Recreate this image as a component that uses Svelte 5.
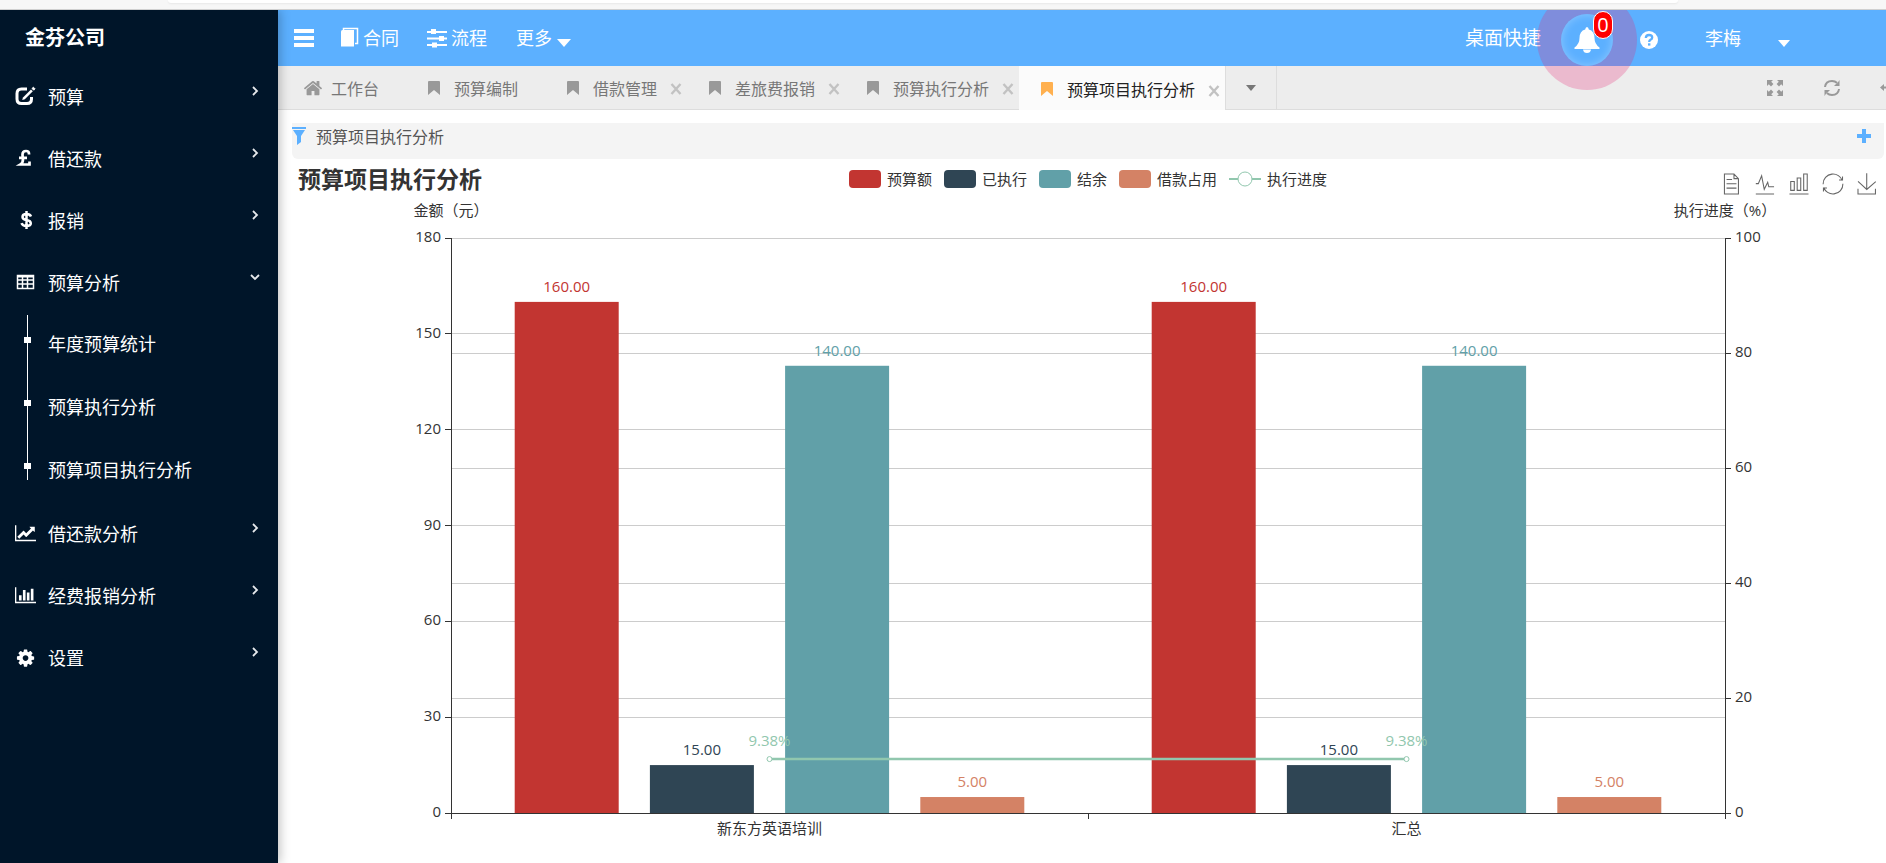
<script>
	let chartWidth = 1593;

	const menu = [
		{ name: '预算', icon: 'edit' },
		{ name: '借还款', icon: 'gbp' },
		{ name: '报销', icon: 'usd' },
		{
			name: '预算分析',
			icon: 'table',
			open: true,
			children: ['年度预算统计', '预算执行分析', '预算项目执行分析']
		},
		{ name: '借还款分析', icon: 'line' },
		{ name: '经费报销分析', icon: 'bar' },
		{ name: '设置', icon: 'cog' }
	];

	const tabs = [
		{ name: '工作台', home: true },
		{ name: '预算编制' },
		{ name: '借款管理', close: true },
		{ name: '差旅费报销', close: true },
		{ name: '预算执行分析', close: true },
		{ name: '预算项目执行分析', close: true, active: true }
	];

	const series = [
		{ name: '预算额', color: '#c23531', data: [160, 160] },
		{ name: '已执行', color: '#2f4554', data: [15, 15] },
		{ name: '结余', color: '#61a0a8', data: [140, 140] },
		{ name: '借款占用', color: '#d48265', data: [5, 5] }
	];
	const progress = { name: '执行进度', color: '#91c7ae', data: [9.38, 9.38] };
	const categories = ['新东方英语培训', '汇总'];

	const toolbox = [
		{ name: '数据视图', d: 'M17.5,17.3H33M45.4,29.5h-28M11.5,2v56H51V14.8L38.4,2H11.5zM38.4,2.2v12.7H51M45.4,41.7h-28' },
		{ name: '切换为折线图', d: 'M4.1,28.9h7.1l9.3-22l7.4,38l9.7-19.7l3,12.8h14.9M4.1,58h51.4' },
		{ name: '切换为柱状图', d: 'M6.7,22.9h10V48h-10V22.9zM24.9,13h10v35h-10V13zM43.2,2h10v46h-10V2zM3.1,58h53.7' },
		{ name: '还原', d: 'M47,18.9h9.8V8.7M56.3,20.1C52.1,9,40.5,0.6,26.8,2.1C12.6,3.7,1.6,16.2,2.1,30.6M13,41.1H3.1v10.2M3.7,39.9c4.2,11.1,15.8,19.5,29.5,18c14.2-1.6,25.2-14.1,24.7-28.5' },
		{ name: '保存为图片', d: 'M4.7,22.9L29.3,45.5L54.7,23.4M4.6,43.6L4.6,58L53.8,58L53.8,43.6M29.2,45.1L29.2,0' }
	];

	// 绘图区
	const top = 75;
	const bottom = 650;
	const leftTicks = [0, 30, 60, 90, 120, 150, 180];
	const rightTicks = [0, 20, 40, 60, 80, 100];

	const yLeft = (v) => bottom - (v / 180) * (bottom - top);
	const yRight = (v) => bottom - (v / 100) * (bottom - top);

	$: left = Math.round(chartWidth * 0.1);
	$: right = Math.round(chartWidth * 0.9);
	$: band = (right - left) / categories.length;
	$: barWidth = (band * 0.8) / 4.9;
	$: barX = (c, s) => left + band * (c + 0.1) + barWidth * 1.3 * s;
	$: center = (c) => left + band * (c + 0.5);
</script>

<div class="page">
	<div class="chrome"><div class="address"></div></div>
	<div class="layout">
		<aside>
			<div class="brand">金芬公司</div>
			<nav>
				{#each menu as item}
					<a class="item" href="#menu">
						<svg class="item-icon" viewBox="0 0 22 22" aria-hidden="true">
							{#if item.icon === 'edit'}
								<path d="M13 4H7.500Q3 4 3 8.500V14Q3 18.500 7.500 18.500H13Q17.500 18.500 17.500 14V12" fill="none" stroke="#fff" stroke-width="3" />
								<path d="M9 12.500L17 4.500L18.800 6.300L10.800 14.200L8.200 15z" />
								<path d="M18 3.500L19.400 2.200L21 3.800L19.700 5.200z" stroke="#fff" />
							{:else if item.icon === 'gbp'}
								<path d="M15 7.500V6.700Q15 4 12 4Q8.500 4 8.500 7.500Q8.500 9.500 9 12Q9 16 6.500 17.500H15.500V14.500M5 10.800H13" fill="none" stroke="#fff" stroke-width="2.700" />
							{:else if item.icon === 'usd'}
								<path d="M17 7.500Q16 5 12.500 5Q8.500 5 8.500 7.900Q8.500 10.200 12.500 11Q16.800 11.800 16.800 14.300Q16.800 17 12.500 17Q8.500 17 7.500 14.200M12.500 2V20" fill="none" stroke="#fff" stroke-width="2.500" />
							{:else if item.icon === 'table'}
								<path d="M3.500 4.500H19.500V17.500H3.500zM3.500 9H19.500M3.500 13H19.500M8.500 6V18M13.500 6V18" fill="none" stroke="#fff" stroke-width="1.500" />
								<path d="M3 4H20V6.500H3z" />
							{:else if item.icon === 'line'}
								<path transform="translate(1 2) scale(0.0103)" d="M2048 1536v128h-2048v-1536h128v1408h1920zm-128-1248v435q0 21-19.500 29.500t-35.500-7.500l-121-121-633 633q-10 10-23 10t-23-10l-233-233-416 416-192-192 585-585q10-10 23-10t23 10l233 233 464-464-121-121q-16-16-7.500-35.500t29.500-19.500h435q14 0 23 9t9 23z" />
							{:else if item.icon === 'bar'}
								<path transform="translate(1 2) scale(0.0103)" d="M640 896v512h-256v-512h256zm384-512v1024h-256v-1024h256zm1024 1152v128h-2048v-1536h128v1408h1920zm-640-896v768h-256v-768h256zm384-384v1152h-256v-1152h256z" />
							{:else}
								<path transform="translate(1.500 2) scale(0.0112)" d="M1152 896q0-106-75-181t-181-75-181 75-75 181 75 181 181 75 181-75 75-181zm512-109v222q0 12-8 23t-20 13l-185 28q-19 54-39 91 35 50 107 138 10 12 10 25t-9 23q-27 37-99 108t-94 71q-12 0-26-9l-138-108q-44 23-91 38-16 136-29 186-7 28-36 28h-222q-14 0-24.500-8.500t-11.500-21.500l-28-184q-49-16-90-37l-141 107q-10 9-25 9-14 0-25-11-126-114-165-168-7-10-7-23 0-12 8-23 15-21 51-66.500t54-70.500q-27-50-41-99l-183-27q-13-2-21-12.500t-8-23.500v-222q0-12 8-23t19-13l186-28q14-46 39-92-40-57-107-138-10-12-10-24 0-10 9-23 26-36 98.500-107.500t94.500-71.500q13 0 26 10l138 107q44-23 91-38 16-136 29-186 7-28 36-28h222q14 0 24.500 8.500t11.500 21.500l28 184q49 16 90 37l142-107q9-9 24-9 13 0 25 10 129 119 165 170 7 8 7 22 0 12-8 23-15 21-51 66.500t-54 70.500q26 50 41 98l183 28q13 2 21 12.500t8 23.500z" />
							{/if}
						</svg>
						<span>{item.name}</span>
						<svg class="chevron" class:open={item.open} viewBox="0 0 10 10" aria-hidden="true">
							<path d="M3 1L7 5L3 9" fill="none" stroke="#e6e9ec" stroke-width="1.800" />
						</svg>
					</a>
					{#if item.children}
						<div class="submenu">
							{#each item.children as child}
								<a class="sub" href="#menu">{child}</a>
							{/each}
						</div>
					{/if}
				{/each}
			</nav>
		</aside>

		<main>
			<header>
				<button class="toggle" aria-label="菜单">
					<svg width="22" height="18" viewBox="0 0 22 18"><path d="M1 0H21V4H1zM1 7H21V11H1zM1 14H21V18H1z" fill="#fff" /></svg>
				</button>
				<a class="link contract" href="#contract">
					<svg width="20" height="22" viewBox="0 0 20 22">
						<path d="M3.500 3.500V1.500H17.500V16.500H15" fill="none" stroke="#fff" stroke-width="1.500" />
						<path d="M1 4.500Q1 3 2.500 3H14V19.500H1z" fill="#fff" />
					</svg>
					合同
				</a>
				<a class="link flow" href="#flow">
					<svg width="22" height="20" viewBox="0 0 22 20">
						<path d="M1 4H21M1 10.500H21M1 17H21" stroke="#fff" stroke-width="2" />
						<path d="M5 1H10V6H5zM13 8H18V13H13zM6 14.500H11V19.500H6z" fill="#fff" />
					</svg>
					流程
				</a>
				<button class="more">更多<i class="caret"></i></button>
				<div class="tools">
					<a class="quick" href="#desktop">桌面快捷</a>
					<button class="bell" aria-label="消息">
						<svg width="26" height="28" viewBox="0 0 26 28">
							<path d="M13 1Q14.500 1 14.800 3.500Q20.500 5 20.500 12Q20.500 18 25.500 21.500V23H.500V21.500Q5.500 18 5.500 12Q5.500 5 11.200 3.500Q11.500 1 13 1zM9 23.500H17Q16.500 27 13 27Q9.500 27 9 23.500z" fill="#fff" />
						</svg>
						<span class="badge">0</span>
					</button>
					<button class="help" aria-label="帮助">
						<svg width="20" height="20" viewBox="0 0 20 20">
							<circle cx="10" cy="10" r="9" fill="#fff" />
							<path d="M6.800 8Q7 5 10 5Q13.200 5 13.200 7.500Q13.200 9 11.500 9.800Q10.200 10.500 10.200 12" fill="none" stroke="#5cb0ff" stroke-width="2.300" />
							<path d="M9 13.300H11.400V15.600H9z" fill="#5cb0ff" />
						</svg>
					</button>
					<button class="user">李梅<i class="caret small"></i></button>
				</div>
			</header>

			<div class="tabs">
				{#each tabs as tab}
					<div class="tab" class:active={tab.active}>
						<a href="#tab" class:home={tab.home}>
							{#if tab.home}
								<svg width="20" height="18" viewBox="0 80 1792 1600" aria-hidden="true"><path fill="#999" d="M1472 992v480q0 26-19 45t-45 19h-384v-384h-256v384h-384q-26 0-45-19t-19-45v-480q0-1 .500-3t.500-3l575-474 575 474q1 2 1 6zm223-69l-62 74q-8 9-21 11h-3q-13 0-21-7l-692-577-692 577q-12 8-24 7-13-2-21-11l-62-74q-8-10-7-23.500t11-21.500l719-599q32-26 76-26t76 26l244 204v-195q0-14 9-23t23-9h192q14 0 23 9t9 23v408l219 182q10 8 11 21.500t-7 23.500z" /></svg>
							{:else}
								<svg class="mark" width="12" height="14" viewBox="0 0 12 14" aria-hidden="true"><path d="M0 1Q0 0 1 0H11Q12 0 12 1V14L6 9L0 14z" /></svg>
							{/if}
							{tab.name}
						</a>
						{#if tab.close}
							<button class="close" aria-label="关闭">
								<svg width="12" height="12" viewBox="0 0 12 12"><path d="M1.500 1L10.500 11M10.500 1L1.500 11" stroke="#c2c2c2" stroke-width="2.400" /></svg>
							</button>
						{/if}
					</div>
				{/each}
				<button class="dropdown" aria-label="更多标签"><i></i></button>
				<div class="tab-tools">
					<button aria-label="全屏">
						<svg width="18" height="18" viewBox="0 0 18 18">
							<path d="M1 1H7L5.200 2.800L7.400 5L5 7.400L2.800 5.200L1 7zM17 1V7L15.200 5.200L13 7.400L10.600 5L12.800 2.800L11 1zM1 17V11L2.800 12.800L5 10.600L7.400 13L5.200 15.200L7 17zM17 17H11L12.800 15.200L10.600 13L13 10.600L15.200 12.800L17 11z" fill="#999" />
						</svg>
					</button>
					<button aria-label="刷新">
						<svg width="18" height="18" viewBox="0 0 18 18">
							<path d="M2 8Q2.700 2 9 2Q12 2 14.200 4M16 10Q15.300 16 9 16Q6 16 3.800 14" fill="none" stroke="#999" stroke-width="2" />
							<path d="M16.500 1V7H11L13 5L14.500 4zM1.500 17V11H7L5 13L3.500 14z" fill="#999" />
						</svg>
					</button>
					<button aria-label="返回">
						<svg width="18" height="18" viewBox="0 0 18 18"><path d="M0 8.500L4 5V7.500H17V9.500H4V12z" fill="#999" /></svg>
					</button>
				</div>
			</div>

			<section>
				<div class="panel">
					<svg width="14" height="20" viewBox="0 0 14 20" aria-hidden="true"><path d="M0 1H14V3H0zM1 4H13L9 10V16L5 19V10z" fill="#5cb0ff" /></svg>
					<h2>预算项目执行分析</h2>
					<button aria-label="展开"><svg width="14" height="14" viewBox="0 0 14 14"><path d="M5 0H9V5H14V9H9V14H5V9H0V5H5z" fill="#5cb0ff" /></svg></button>
				</div>

				<div class="chart" bind:clientWidth={chartWidth}>
					<div class="chart-head">
						<h1>预算项目执行分析</h1>
						<div class="legend">
							{#each series as s}
								<span class="key">
									<svg width="32" height="18" viewBox="0 0 32 18"><rect width="32" height="18" rx="4" fill={s.color} /></svg>
									{s.name}
								</span>
							{/each}
							<span class="key">
								<svg width="32" height="18" viewBox="0 0 32 18">
									<path d="M0 9H32" stroke={progress.color} stroke-width="2" />
									<circle cx="16" cy="9" r="7" fill="#fff" stroke={progress.color} />
								</svg>
								{progress.name}
							</span>
						</div>
						<div class="toolbox">
							{#each toolbox as tool}
								<button aria-label={tool.name}>
									<svg width="22" height="22" viewBox="-1 -1 62 62"><path d={tool.d} fill="none" stroke="#666" stroke-width="3" /></svg>
								</button>
							{/each}
						</div>
					</div>
					<svg class="plot" width="100%" height="700" role="img" aria-label="预算项目执行分析">
						<g stroke="#ccc" shape-rendering="crispEdges">
							{#each leftTicks.slice(1) as t}
								<line x1={left} x2={right} y1={yLeft(t)} y2={yLeft(t)} />
							{/each}
							{#each rightTicks.slice(1) as t}
								<line x1={left} x2={right} y1={yRight(t)} y2={yRight(t)} />
							{/each}
						</g>

						{#each series as s, i}
							{#each s.data as v, c}
								<rect x={barX(c, i)} y={yLeft(v)} width={barWidth} height={bottom - yLeft(v)} fill={s.color} />
							{/each}
						{/each}

						<g stroke="#333" shape-rendering="crispEdges">
							<line x1={left} x2={left} y1={top} y2={bottom} />
							<line x1={right} x2={right} y1={top} y2={bottom} />
							<line x1={left} x2={right} y1={bottom} y2={bottom} />
							{#each leftTicks as t}
								<line x1={left - 6} x2={left} y1={yLeft(t)} y2={yLeft(t)} />
							{/each}
							{#each rightTicks as t}
								<line x1={right} x2={right + 6} y1={yRight(t)} y2={yRight(t)} />
							{/each}
							{#each [0, 1, 2] as c}
								<line x1={left + band * c} x2={left + band * c} y1={bottom} y2={bottom + 6} />
							{/each}
						</g>

						<g fill="#333">
							{#each leftTicks as t}
								<text x={left - 10} y={yLeft(t) + 4} text-anchor="end">{t}</text>
							{/each}
							{#each rightTicks as t}
								<text x={right + 10} y={yRight(t) + 4}>{t}</text>
							{/each}
							<text x={left} y="53" text-anchor="middle">金额（元）</text>
							<text x={right} y="53" text-anchor="middle">执行进度（%）</text>
							{#each categories as name, c}
								<text x={center(c)} y={bottom + 21} text-anchor="middle">{name}</text>
							{/each}
						</g>

						{#each series as s, i}
							{#each s.data as v, c}
								<text x={barX(c, i) + barWidth / 2} y={yLeft(v) - 10} fill={s.color} text-anchor="middle">{v.toFixed(2)}</text>
							{/each}
						{/each}

						<path d="M{center(0)} {yRight(progress.data[0])}L{center(1)} {yRight(progress.data[1])}" stroke={progress.color} stroke-width="2.5" />
						{#each progress.data as v, c}
							<circle cx={center(c)} cy={yRight(v)} r="2.5" fill="#fff" stroke={progress.color} />
							<text x={center(c)} y={yRight(v) - 13} fill={progress.color} text-anchor="middle">{v}%</text>
						{/each}
					</svg>
				</div>
			</section>
		</main>
	</div>
</div>

<style>
	:global(body) {
		overflow: hidden;
	}

	.page {
		display: flex;
		flex-direction: column;
		height: 100vh;
		overflow: hidden;
		background: #fff;
		font-family: "Open Sans", "Noto Sans CJK SC", sans-serif;
		font-size: 16px;
	}

	a {
		color: inherit;
		text-decoration: none;
	}

	button {
		display: flex;
		align-items: center;
		padding: 0;
		border: 0;
		background: none;
		color: inherit;
		font: inherit;
	}

	h1,
	h2 {
		margin: 0;
	}

	svg {
		display: block;
		flex: none;
	}

	.chrome {
		position: relative;
		z-index: 2;
		flex: none;
		height: 9px;
		padding: 0 208px 0 168px;
		border-bottom: 1px solid #d0d0d0;
		background: #f7f7f7;
	}

	.address {
		height: 3px;
		border-radius: 0 0 5px 5px;
		background: #fff;
		box-shadow: 0 1px 2px #e8e8e8;
	}

	.layout {
		display: flex;
		flex: 1;
		min-height: 0;
	}

	aside {
		position: relative;
		z-index: 1;
		flex: none;
		width: 278px;
		background: #001529;
		box-shadow: 2px 0 10px rgba(0, 0, 0, 0.25);
		color: #fff;
		font-size: 18px;
	}

	.brand {
		padding-left: 25px;
		font-size: 20px;
		font-weight: bold;
		line-height: 55px;
	}

	.item {
		display: flex;
		align-items: center;
		height: 62px;
		padding: 0 18px 0 14px;
	}

	.item-icon {
		width: 22px;
		height: 22px;
		margin-right: 12px;
		fill: #fff;
	}

	.chevron {
		width: 10px;
		height: 10px;
		margin: 0 0 10px auto;
	}

	.chevron.open {
		transform: rotate(90deg);
	}

	.submenu {
		position: relative;
	}

	.submenu::before {
		content: '';
		position: absolute;
		top: 2px;
		bottom: 22px;
		left: 27px;
		width: 1px;
		background: #fff;
	}

	.sub {
		position: relative;
		display: block;
		padding-left: 48px;
		line-height: 63px;
	}

	.sub::before {
		content: '';
		position: absolute;
		top: 24px;
		left: 24px;
		width: 7px;
		height: 6px;
		background: #fff;
	}

	main {
		flex: 1;
		min-width: 0;
	}

	header {
		display: flex;
		align-items: center;
		height: 56px;
		padding: 0 96px 0 15px;
		background: #5cb0ff;
		color: #fff;
		font-size: 18px;
		line-height: 20px;
	}

	.link {
		display: flex;
		align-items: center;
		gap: 3px;
	}

	.contract {
		margin-left: 25px;
	}

	.flow {
		margin-left: 27px;
	}

	.more {
		gap: 5px;
		margin-left: 29px;
	}

	.caret {
		margin-top: 10px;
		border: 7px solid transparent;
		border-top: 8px solid #fff;
		border-bottom: 0;
	}

	.caret.small {
		border-width: 7px 6px 0;
	}

	.tools {
		display: flex;
		align-items: center;
		margin-left: auto;
	}

	.quick {
		font-size: 19px;
	}

	.bell {
		position: relative;
		justify-content: center;
		width: 52px;
		height: 52px;
		margin: 4px 26px 0 20px;
		border-radius: 50%;
		box-shadow: 0 0 0 24px rgba(233, 37, 117, 0.25), inset 0 0 10px rgba(255, 255, 255, 0.3);
	}

	.badge {
		position: absolute;
		top: -3px;
		right: 0;
		width: 18px;
		border: 1px solid #fff;
		border-radius: 10px;
		background: #f00;
		font-size: 20px;
		line-height: 26px;
		text-align: center;
	}

	.help {
		margin-top: 4px;
	}

	.user {
		gap: 37px;
		margin-left: 46px;
	}

	.tabs {
		display: flex;
		height: 43px;
		border-bottom: 1px solid #ddd;
		background: #ededed;
		color: #777;
	}

	.tab {
		display: flex;
		align-items: center;
		flex: none;
		padding: 0 5px 0 22px;
	}

	.tab a {
		display: flex;
		align-items: center;
		gap: 14px;
	}

	.tab a.home {
		gap: 8px;
		padding-left: 3px;
	}

	.tab a:only-child {
		padding-right: 22px;
	}

	.mark {
		fill: #999;
	}

	.close {
		margin: 3px 0 0 13px;
	}

	.tab.active {
		height: 42px;
		padding-top: 2px;
		border-right: 1px solid #ddd;
		background: #fbfbfb;
		color: #222;
	}

	.active .mark {
		fill: #ffb04f;
	}

	.dropdown {
		justify-content: center;
		width: 51px;
		border-right: 1px solid #ddd;
	}

	.dropdown i {
		border: 5px solid transparent;
		border-top: 6px solid #777;
		border-bottom: 0;
	}

	.tab-tools {
		display: flex;
		gap: 39px;
		margin: 0 -12px 0 auto;
	}

	section {
		padding: 13px 2px 0 14px;
	}

	.panel {
		display: flex;
		align-items: center;
		height: 26px;
		padding: 0 13px 10px 0;
		border-radius: 0 0 6px 6px;
		background: #f4f4f4;
		color: #555;
	}

	.panel h2 {
		margin-left: 10px;
		font-size: 16px;
		font-weight: normal;
	}

	.panel button {
		margin-left: auto;
	}

	.chart {
		display: grid;
		margin-top: 4px;
	}

	.chart-head,
	.plot {
		grid-area: 1 / 1;
	}

	.chart-head {
		display: grid;
		grid-template-columns: 1fr auto 1fr;
		align-items: center;
		align-self: start;
		height: 28px;
		padding: 0 6px;
		color: #333;
	}

	h1 {
		font-size: 23px;
		line-height: 28px;
	}

	.legend {
		display: flex;
		gap: 12px;
		font-size: 15px;
		line-height: 28px;
	}

	.key {
		display: flex;
		align-items: center;
		gap: 6px;
	}

	.toolbox {
		display: flex;
		justify-content: flex-end;
		gap: 12px;
		padding-top: 10px;
	}

	.plot {
		overflow: hidden;
		font-size: 15px;
	}
</style>
